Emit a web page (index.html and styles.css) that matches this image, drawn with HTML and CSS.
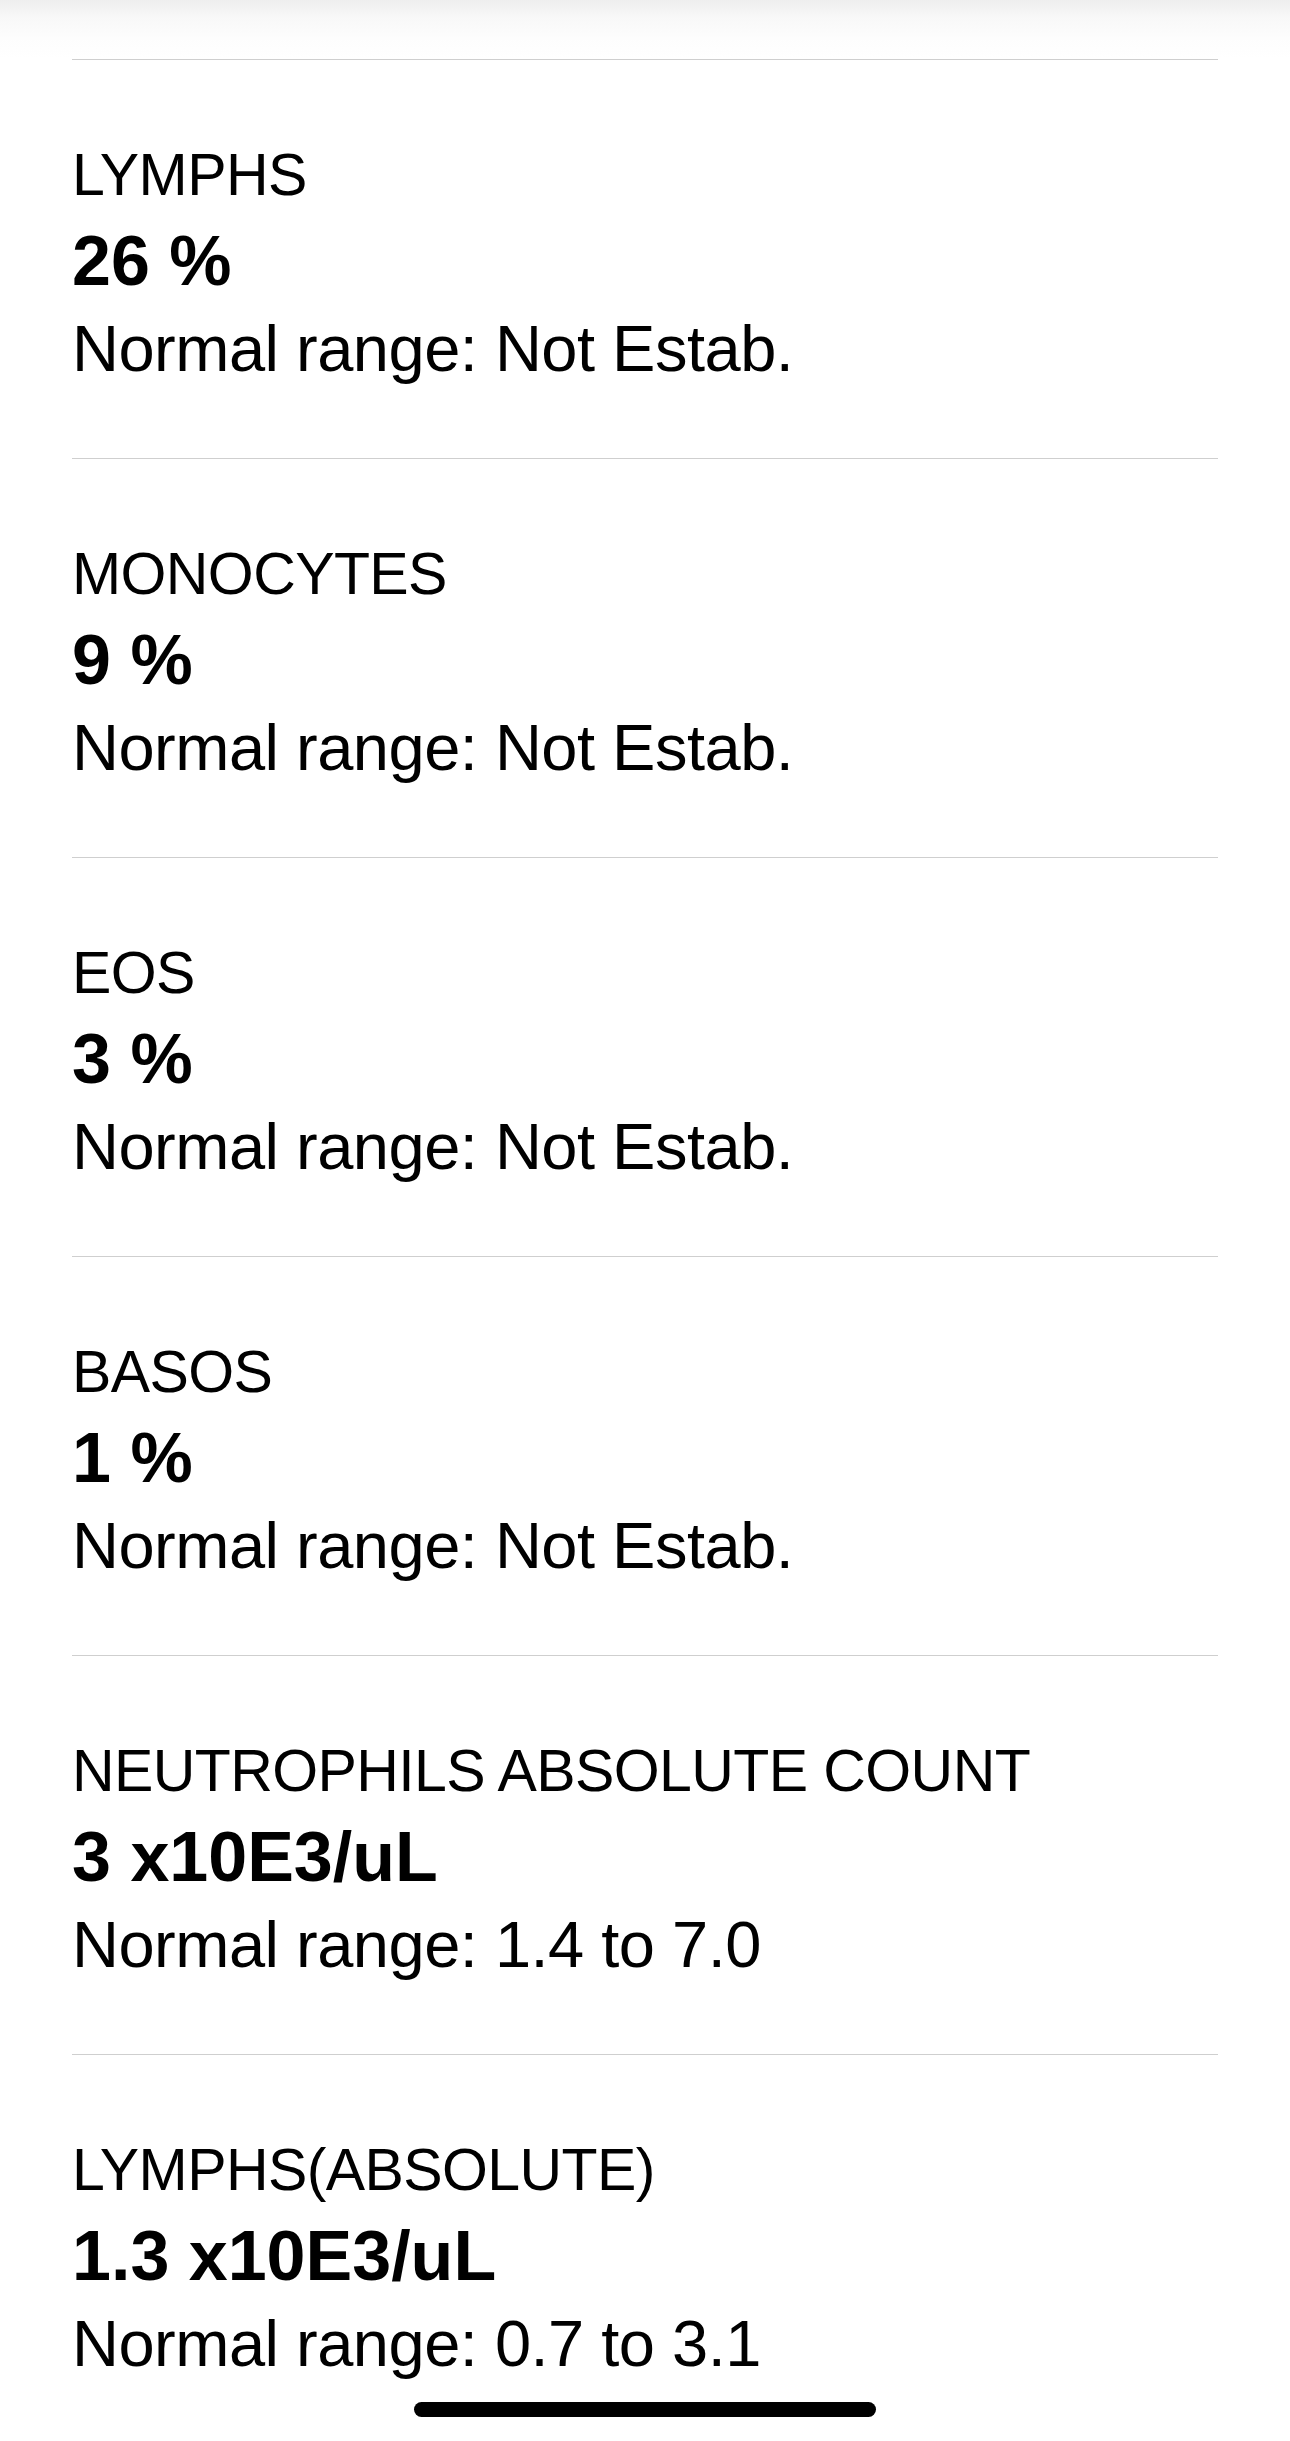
FILE: index.html
```html
<!DOCTYPE html>
<html lang="en">
<head>
<meta charset="utf-8">
<title>Lab results</title>
<link rel="stylesheet" href="styles.css">
</head>
<body>
<div class="topshade"></div>
<main class="results">
  <section class="item">
    <div class="label">LYMPHS</div>
    <div class="value">26 %</div>
    <div class="range">Normal range: Not Estab.</div>
  </section>
  <section class="item">
    <div class="label">MONOCYTES</div>
    <div class="value">9 %</div>
    <div class="range">Normal range: Not Estab.</div>
  </section>
  <section class="item">
    <div class="label">EOS</div>
    <div class="value">3 %</div>
    <div class="range">Normal range: Not Estab.</div>
  </section>
  <section class="item">
    <div class="label">BASOS</div>
    <div class="value">1 %</div>
    <div class="range">Normal range: Not Estab.</div>
  </section>
  <section class="item">
    <div class="label">NEUTROPHILS ABSOLUTE COUNT</div>
    <div class="value">3 x10E3/uL</div>
    <div class="range">Normal range: 1.4 to 7.0</div>
  </section>
  <section class="item">
    <div class="label">LYMPHS(ABSOLUTE)</div>
    <div class="value">1.3 x10E3/uL</div>
    <div class="range">Normal range: 0.7 to 3.1</div>
  </section>
</main>
<div class="home-indicator"></div>
</body>
</html>
```
FILE: styles.css
```css
html, body {
  margin: 0;
  padding: 0;
  background: #ffffff;
}
body {
  width: 1290px;
  height: 2441px;
  overflow: hidden;
  position: relative;
  font-family: "Liberation Sans", Arial, sans-serif;
  color: #000000;
}
.topshade {
  height: 59px;
  background: linear-gradient(to bottom, #eeeeee 0%, #f8f8f8 30%, #fdfdfd 65%, #ffffff 100%);
}
.results {
  padding: 0 72px;
}
.item {
  border-top: 1px solid #cfcfcf;
  padding: 75px 0 67px;
}
.label {
  font-size: 59px;
  line-height: 80px;
  letter-spacing: -0.6px;
  white-space: nowrap;
}
.value {
  font-size: 70px;
  font-weight: 700;
  line-height: 92px;
  white-space: nowrap;
}
.range {
  font-size: 65px;
  line-height: 84px;
  letter-spacing: -0.5px;
  white-space: nowrap;
}
.home-indicator {
  position: absolute;
  left: 414px;
  top: 2402px;
  width: 462px;
  height: 15px;
  border-radius: 8px;
  background: #000000;
}
```
